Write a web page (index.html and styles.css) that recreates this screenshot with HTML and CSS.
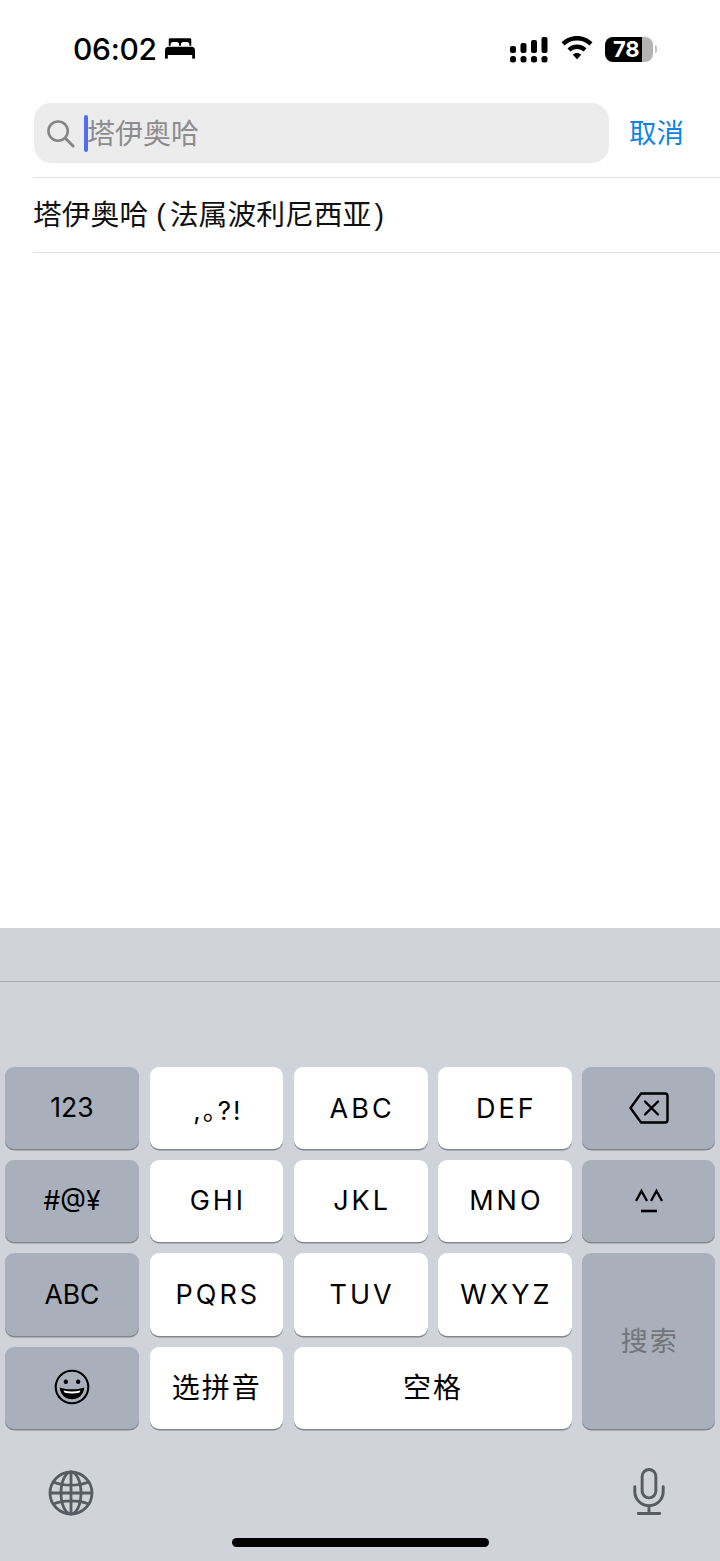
FILE: index.html
```html
<!DOCTYPE html>
<html lang="zh-CN">
<head>
<meta charset="utf-8">
<title>搜索</title>
<link rel="stylesheet" href="styles.css">
</head>
<body>
<div class="page">
  <header class="status">
    <div class="status-left">
      <span class="time">06:02</span>
      <svg class="bed" viewBox="0 0 32 22" width="30" height="21"><path d="M4 1.500C4 .7 4.700 0 5.500 0h21c.8 0 1.500.7 1.500 1.500V8h-2V6.500C26 5 25 4 23.500 4h-4C18 4 17 5 17 6.500V8h-2V6.500C15 5 14 4 12.500 4h-4C7 4 6 5 6 6.500V8H4z" fill="#000"/><path d="M3.500 9h25C30.500 9 32 10.500 32 12.500V18H0v-5.500C0 10.500 1.500 9 3.500 9zM0 18h3v3.200c0 .5-.3.800-.8.800H.8c-.5 0-.8-.3-.8-.8zM29 18h3v3.200c0 .5-.3.800-.8.800h-1.400c-.5 0-.8-.3-.8-.8z" fill="#000"/></svg>
    </div>
    <div class="status-right">
      <svg class="signal" viewBox="0 0 38 26" width="38" height="26" fill="#000"><rect x="0" y="9" width="6" height="7" rx="2"/><rect x="10.500" y="6" width="6" height="10" rx="2"/><rect x="21" y="3" width="6" height="13" rx="2"/><rect x="31.500" y="0" width="6" height="16" rx="2"/><rect x="0" y="19" width="6" height="6.500" rx="2.500"/><rect x="10.500" y="19" width="6" height="6.500" rx="2.500"/><rect x="21" y="19" width="6" height="6.500" rx="2.500"/><rect x="31.500" y="19" width="6" height="6.500" rx="2.500"/></svg>
      <svg class="wifi" viewBox="0 0 32 24" width="32" height="24"><path d="M16 0C10 0 4.500 2.400.5 6.300l3 3.200C6.700 6.300 11.100 4.400 16 4.400s9.300 1.900 12.500 5.100l3-3.200C27.500 2.400 22 0 16 0zM16 8.600c-3.700 0-7 1.500-9.500 3.800l3 3.200c1.700-1.600 4-2.600 6.500-2.600s4.800 1 6.500 2.600l3-3.200C23 10.100 19.700 8.600 16 8.600zM16 17c-1.600 0-3.100.6-4.200 1.700L16 23.200l4.200-4.500C19.100 17.600 17.600 17 16 17z" fill="#000"/></svg>
      <div class="battery">
        <div class="battery-body"><span class="battery-num">78</span></div>
        <span class="battery-cap"></span>
      </div>
    </div>
  </header>

  <div class="search-row">
    <div class="search-box">
      <svg class="search-icon" viewBox="0 0 30 30" width="29" height="29"><circle cx="12.500" cy="12.500" r="10" fill="none" stroke="#858585" stroke-width="2.600"/><path d="M20 20l8 8" stroke="#858585" stroke-width="3" stroke-linecap="round"/></svg>
      <span class="caret"></span>
      <span class="placeholder">塔伊奥哈</span>
    </div>
    <span class="cancel">取消</span>
  </div>

  <main class="results">
    <div class="result">塔伊奥哈 <span class="paren-open">(</span>法属波利尼西亚<span class="paren-close">)</span></div>
  </main>

  <section class="keyboard">
    <div class="candidates"></div>
    <div class="keys">
      <div class="key dark num">123</div>
      <div class="key sym">,。?!</div>
      <div class="key">ABC</div>
      <div class="key">DEF</div>
      <div class="key dark">
        <svg viewBox="0 0 40 32" width="40" height="32" fill="none" stroke="#000" stroke-width="2.400" stroke-linejoin="round" stroke-linecap="round"><path d="M12 1.500h24c1.400 0 2.500 1.100 2.500 2.500v24c0 1.400-1.100 2.500-2.500 2.500H12L1.500 16z"/><path d="M16 9.500l13 13M29 9.500l-13 13"/></svg>
      </div>

      <div class="key dark num">#@¥</div>
      <div class="key lift">GHI</div>
      <div class="key lift">JKL</div>
      <div class="key lift">MNO</div>
      <div class="key dark">
        <svg viewBox="0 0 30 26" width="30" height="26" fill="none" stroke="#000" stroke-width="2.300"><path d="M2 13l5.500-10L13 13M17 13l5.500-10L28 13"/><path d="M7 23h16" stroke-width="2.600"/></svg>
      </div>

      <div class="key dark num">ABC</div>
      <div class="key lift">PQRS</div>
      <div class="key lift">TUV</div>
      <div class="key lift">WXYZ</div>
      <div class="key dark search-key">搜索</div>

      <div class="key dark num">
        <svg viewBox="0 0 38 38" width="36" height="36"><circle cx="19" cy="19" r="17.200" fill="none" stroke="#000" stroke-width="2.200"/><circle cx="12.500" cy="13.500" r="2.300" fill="#000"/><circle cx="25.500" cy="13.500" r="2.300" fill="#000"/><path d="M6 19.500c4 1.300 8.500 2 13 2s9-.7 13-2c-.5 7.500-6 12.500-13 12.500S6.500 27 6 19.500z" fill="#000"/><path d="M10 22.800c3 .7 6 1 9 1s6-.3 9-1c-.4.900-.8 1.700-1.400 2.400-2.400.4-5 .6-7.600.6s-5.200-.2-7.600-.6c-.6-.7-1-1.500-1.400-2.400z" fill="#fff"/></svg>
      </div>
      <div class="key cjk">选拼音</div>
      <div class="key cjk space">空格</div>
    </div>
    <div class="keyboard-bottom">
      <svg viewBox="0 0 46 46" width="46" height="46" fill="none" stroke="#575b64" stroke-width="2.800"><circle cx="23" cy="23" r="21"/><ellipse cx="23" cy="23" rx="10" ry="21"/><path d="M23 2v42M2 23h42M5.500 12c5 2.200 11 3.200 17.500 3.200s12.500-1 17.500-3.200M5.500 34c5-2.200 11-3.200 17.500-3.200s12.500 1 17.500 3.200"/></svg>
      <svg class="mic" viewBox="0 0 32 48" width="32" height="47" fill="none" stroke="#575b64" stroke-width="3" stroke-linecap="round"><rect x="9" y="1.500" width="14" height="29" rx="7"/><path d="M1.500 19v5c0 8 6.500 14.500 14.500 14.500S30.500 32 30.500 24v-5M16 38.500V46M5 46.500h22"/></svg>
    </div>
    <div class="home-wrap"><span class="home"></span></div>
  </section>
</div>
</body>
</html>
```
FILE: styles.css
```css
* { box-sizing: border-box; }
html, body { margin: 0; padding: 0; background: #fff; }
body { font-family: "Liberation Sans", "Noto Sans CJK SC", sans-serif; color: #000; }

.page { width: 720px; height: 1561px; display: flex; flex-direction: column; overflow: hidden; }

/* status bar */
.status { height: 103px; padding: 30px 63px 0 73px; display: flex; justify-content: space-between; align-items: flex-start; flex: none; }
.status-left { display: flex; align-items: center; gap: 8px; height: 38px; }
.time { font-family: Inter, "Liberation Sans", sans-serif; font-size: 30px; font-weight: 500; line-height: 38px; letter-spacing: -.3px; }
.bed { margin-top: -1px; }
.status-right { display: flex; align-items: center; height: 38px; }
.signal { margin-right: 13px; margin-top: 1px; }
.wifi { margin-right: 12px; margin-top: -2px; }
.battery { display: flex; align-items: center; gap: 2px; }
.battery-body { width: 48px; height: 25px; border-radius: 8px; background: linear-gradient(90deg, #000 0 77%, #b3b3b3 77%); padding-left: 8px; }
.battery-num { display: block; color: #fff; font-family: Inter, "Liberation Sans", sans-serif; font-size: 22px; font-weight: 700; line-height: 25px; letter-spacing: -.2px; }
.battery-cap { width: 2px; height: 8px; border-radius: 0 2px 2px 0; background: #c4c4c4; }

/* search */
.search-row { display: flex; align-items: center; padding-left: 34px; height: 60px; flex: none; }
.search-box { position: relative; width: 575px; height: 60px; border-radius: 17px; background: #ececed; display: flex; align-items: center; padding-left: 12px; }
.search-icon { flex: none; }
.caret { position: absolute; left: 50px; top: 12px; width: 4px; height: 37px; border-radius: 2px; background: #4f6fee; }
.placeholder { margin: 0 0 2px 12px; font-family: "Noto Sans CJK SC", sans-serif; font-size: 28px; line-height: 58px; color: #8d8d8f; }
.cancel { margin: 0 0 3px 20px; font-family: "Noto Sans CJK SC", sans-serif; font-size: 27.500px; line-height: 57px; color: #0f84e4; }

/* results */
.results { flex: 1; margin-top: 14px; padding-left: 33px; }
.result { height: 76px; border-top: 1px solid #e0e0e2; border-bottom: 1px solid #e0e0e2; font-family: "Liberation Sans", "Noto Sans CJK SC", sans-serif; font-size: 28.800px; line-height: 75px; white-space: nowrap; color: #111; }
.paren-open { margin-right: 4px; }
.paren-close { margin-left: 3px; }

/* keyboard */
.keyboard { height: 633px; flex: none; background: #d0d3da; display: flex; flex-direction: column; }
.candidates { height: 54px; border-bottom: 1px solid #a8abb2; flex: none; }
.keys { margin-top: 85px; padding: 0 5px; display: grid; grid-template-columns: 134px 133.250px 133.750px 133.250px 133px; grid-template-rows: repeat(4, 82.300px); column-gap: 10.750px; row-gap: 10.900px; flex: none; }
.key { background: #fff; border-radius: 9px; box-shadow: 0 1.500px 0 #85878c; display: flex; align-items: center; justify-content: center; padding-left: 3px; font-family: Inter, "Liberation Sans", "Noto Sans CJK SC", sans-serif; font-size: 27px; letter-spacing: 3px; color: #000; }
.key.dark { background: #a9afbb; padding-left: 0; }
.key.lift { padding-bottom: 1px; }
.key.num { padding-bottom: 2px; letter-spacing: 0; font-size: 26.500px; }
.key.sym { font-feature-settings: "halt" 1; font-size: 26px; letter-spacing: 2px; }
.key.cjk { padding-left: 1px; padding-bottom: 3px; font-family: "Noto Sans CJK SC", sans-serif; font-size: 28px; letter-spacing: 2px; }
.space { grid-column: span 2; }
.key.search-key { grid-column: 5; grid-row: 3 / span 2; padding: 0 0 3px 2px; color: #737579; font-family: "Noto Sans CJK SC", sans-serif; font-size: 27px; letter-spacing: 2px; }
.keyboard-bottom { display: flex; justify-content: space-between; align-items: center; padding: 0 55px 0 48px; margin-top: 38px; height: 52px; flex: none; }
.mic { margin-top: -2px; }
.home-wrap { display: flex; justify-content: center; margin-top: 19px; }
.home { width: 257px; height: 9px; border-radius: 5px; background: #000; }
```
